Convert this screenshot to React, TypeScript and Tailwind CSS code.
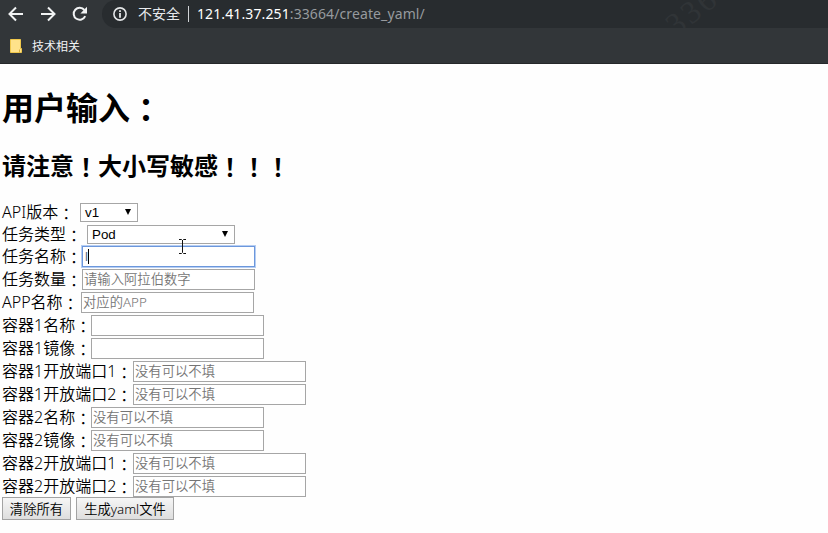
import type { ReactNode } from "react";

const centered = "relative top-px font-['Noto_Sans_CJK_TC',sans-serif]";

function Label({ text, width }: { text: string; width: string }) {
  return (
    <span className={`${width} -mt-px shrink-0 whitespace-nowrap text-[16px] font-[350] leading-[21px]`}>
      {text}
      <span className="relative top-[2px] font-['Noto_Sans_CJK_TC',sans-serif]">：</span>
    </span>
  );
}

function Row({ children, height = "h-[23px]" }: { children: ReactNode; height?: string }) {
  return <div className={`flex items-start ${height}`}>{children}</div>;
}

function SelectBox({ value, width }: { value: string; width: string }) {
  return (
    <div className={`${width} mt-px flex h-[19px] items-center justify-between border border-[#a6a6a6] bg-white pl-1 pr-[6px] font-['Liberation_Sans',sans-serif] text-[13.33px] leading-[17px]`}>
      <span>{value}</span>
      <svg className="-mt-px" width="6" height="6" viewBox="0 0 6 6"><path d="M0 0h6L3 6z" fill="#000" /></svg>
    </div>
  );
}

const fields = [
  { label: "任务数量", hint: "请输入阿拉伯数字", width: "w-[80px]" },
  { label: "APP名称", hint: "对应的APP", width: "w-[79px]" },
  { label: "容器1名称", hint: "", width: "w-[89px]" },
  { label: "容器1镜像", hint: "", width: "w-[89px]" },
  { label: "容器1开放端口1", hint: "没有可以不填", width: "w-[131px]" },
  { label: "容器1开放端口2", hint: "没有可以不填", width: "w-[131px]" },
  { label: "容器2名称", hint: "没有可以不填", width: "w-[89px]" },
  { label: "容器2镜像", hint: "没有可以不填", width: "w-[89px]" },
  { label: "容器2开放端口1", hint: "没有可以不填", width: "w-[131px]" },
  { label: "容器2开放端口2", hint: "没有可以不填", width: "w-[131px]" },
];

function BrowserBar() {
  return (
    <header className="relative h-16 overflow-hidden border-b border-[#25282a] bg-[#323639] text-white">
      <div className="flex h-7 items-center">
        <svg className="ml-2 shrink-0" width="16" height="16" viewBox="0 0 16 16" fill="none" stroke="#f1f3f4" strokeWidth="2"><path d="M15 8H2M8 1.5 1.5 8 8 14.5" /></svg>
        <svg className="ml-4 shrink-0" width="16" height="16" viewBox="0 0 16 16" fill="none" stroke="#f1f3f4" strokeWidth="2"><path d="M1 8h13M8 1.5 14.5 8 8 14.5" /></svg>
        <svg className="ml-4 shrink-0" width="16" height="16" viewBox="0 0 16 16"><path d="M13.2 10.2A6 6 0 1 1 12.4 4" fill="none" stroke="#f1f3f4" strokeWidth="2" /><path d="M15 .8v6.6H8.4z" fill="#f1f3f4" /></svg>
        <div className="ml-[14px] flex h-7 flex-1 items-center rounded-l-[14px] bg-[#282c2f] pl-[11px]">
          <svg className="shrink-0" width="14" height="14" viewBox="0 0 14 14"><circle cx="7" cy="7" r="6.1" fill="none" stroke="#e4e6e8" strokeWidth="1.6" /><path d="M6.1 3.2h1.8v1.7H6.1zM6.1 6h1.8v4.8H6.1z" fill="#e4e6e8" /></svg>
          <span className="ml-[11px] w-[43px] whitespace-nowrap text-[14px] leading-7 text-[#e8eaed]">不安全</span>
          <span className="ml-[7px] h-4 w-px bg-[#d0d3d6]" />
          <span className="ml-2 whitespace-nowrap text-[14px] leading-7 tracking-[0.11px] text-white">121.41.37.251<span className="text-[#969a9e]">:33664/create_yaml/</span></span>
        </div>
      </div>
      <div className="flex h-9 items-center pl-[10px] pt-px">
        <svg className="-mt-px" width="12" height="14" viewBox="0 0 12 14"><path d="M.5.5h10v9h1v4H.5z" fill="#ffe28a" stroke="#f0c84c" /><path d="M9.5 10.5v3" stroke="#d9ad3b" /></svg>
        <span className="ml-[10px] text-[12px] leading-5 text-[#f1f3f4]">技术相关</span>
      </div>
      <svg className="absolute left-[655px] top-0" width="80" height="28" viewBox="0 0 80 28">
        <text transform="translate(21 37) rotate(-38)" fontFamily="Liberation Serif" fontSize="32" letterSpacing="3" fill="#303437">336</text>
      </svg>
    </header>
  );
}

export default function App() {
  return (
    <div className="h-[533px] w-[828px] overflow-hidden bg-[#fefefe] font-['Noto_Sans','Noto_Sans_CJK_SC',sans-serif] text-black">
      <BrowserBar />
      <main className="pl-[2px]">
        <h1 className="mt-[21px] h-[43px] whitespace-nowrap text-[32px] font-bold leading-[43px]">用户输入<span className="relative top-[2px] font-['Noto_Sans_CJK_TC',sans-serif]">：</span></h1>
        <h2 className="mt-[21px] h-8 whitespace-nowrap text-[24px] font-bold leading-8">请注意<span className={centered}>！</span>大小写敏感<span className={centered}>！！！</span></h2>
        <form className="relative mt-[21px]" onSubmit={(event) => event.preventDefault()}>
          <Row height="h-[22px]"><Label text="API版本" width="w-[78px]" /><SelectBox value="v1" width="w-[58px]" /></Row>
          <Row height="h-[22px]"><Label text="任务类型" width="w-[85px]" /><SelectBox value="Pod" width="w-[148px]" /></Row>
          <Row>
            <Label text="任务名称" width="w-[80px]" />
            <div className="flex h-[21px] w-[173px] items-center border border-[#6c97dc] bg-white pl-[2px] font-['Liberation_Sans',sans-serif] text-[13.33px] shadow-[0_0_0_1px_#b6cef3]">
              <span className="text-[#526d88]">l</span><span className="h-[15px] w-px bg-black" />
            </div>
          </Row>
          {fields.map((field) => (
            <Row key={field.label}>
              <Label text={field.label} width={field.width} />
              <input placeholder={field.hint} className="h-[21px] w-[173px] border border-[#a6a6a6] bg-white px-px pb-[2px] text-[13.33px] font-[350] leading-[17px] placeholder:text-[#757575]" />
            </Row>
          ))}
          <div className="-mt-[2px] flex gap-[5px] text-[13.33px] font-[350] leading-[20px]">
            <button type="button" className="h-[23px] w-[69px] whitespace-nowrap border border-[#a3a3a3] bg-linear-to-b from-[#f6f6f6] to-[#dedede]">清除所有</button>
            <button type="button" className="h-[23px] w-[98px] whitespace-nowrap border border-[#a3a3a3] bg-linear-to-b from-[#f6f6f6] to-[#dedede]">生成yaml文件</button>
          </div>
          <svg className="absolute left-[176px] top-9" width="9" height="17" viewBox="0 0 9 17" fill="none" stroke="#111"><path d="M1 1.5h2.5l1 1 1-1H8M4.5 2v12M1 15.5h2.5l1-1 1 1H8" /></svg>
        </form>
      </main>
    </div>
  );
}
